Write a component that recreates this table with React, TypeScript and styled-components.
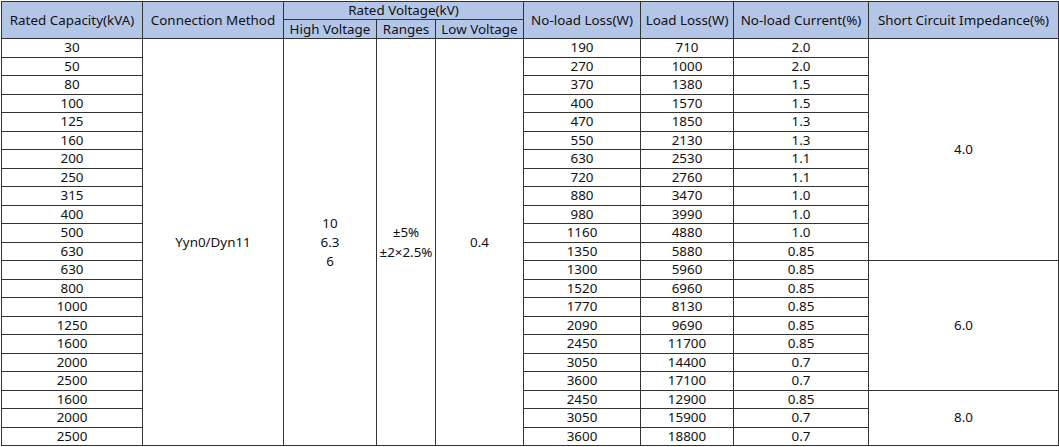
import React from "react";
import styled, { createGlobalStyle } from "styled-components";

const Global = createGlobalStyle`
  html, body { margin: 0; padding: 0; background: #ffffff; }
  body { padding: 1px 0 0 1px; font-family: "Noto Sans", "Open Sans", "Liberation Sans", sans-serif; }
`;

const Table = styled.table`
  border-collapse: collapse;
  table-layout: fixed;
  width: 1057px;
  font-family: "Noto Sans", "Open Sans", "Liberation Sans", sans-serif;
  font-size: 13.4px;
  color: #111;
`;

const HeadRow = styled.tr<{ $h: number }>`
  height: ${(p) => p.$h}px;
`;

const Th = styled.th`
  background: #b4c6e7;
  border: 1px solid #333;
  font-weight: normal;
  padding: 0;
  text-align: center;
  vertical-align: middle;
  line-height: 17px;
  white-space: nowrap;
  overflow: hidden;
`;

const Row = styled.tr`
  height: 18.5px;
`;

const Td = styled.td`
  border: 1px solid #333;
  padding: 0;
  text-align: center;
  vertical-align: middle;
  line-height: 17px;
  white-space: nowrap;
`;

const Stack = styled.div<{ $lh: number }>`
  display: flex;
  flex-direction: column;
  align-items: center;
  line-height: ${(p) => p.$lh}px;
`;

const widths = [141, 141, 93, 59, 88, 117, 93, 135, 190];

const rows: [string, string, string, string][] = [
  ["30", "190", "710", "2.0"],
  ["50", "270", "1000", "2.0"],
  ["80", "370", "1380", "1.5"],
  ["100", "400", "1570", "1.5"],
  ["125", "470", "1850", "1.3"],
  ["160", "550", "2130", "1.3"],
  ["200", "630", "2530", "1.1"],
  ["250", "720", "2760", "1.1"],
  ["315", "880", "3470", "1.0"],
  ["400", "980", "3990", "1.0"],
  ["500", "1160", "4880", "1.0"],
  ["630", "1350", "5880", "0.85"],
  ["630", "1300", "5960", "0.85"],
  ["800", "1520", "6960", "0.85"],
  ["1000", "1770", "8130", "0.85"],
  ["1250", "2090", "9690", "0.85"],
  ["1600", "2450", "11700", "0.85"],
  ["2000", "3050", "14400", "0.7"],
  ["2500", "3600", "17100", "0.7"],
  ["1600", "2450", "12900", "0.85"],
  ["2000", "3050", "15900", "0.7"],
  ["2500", "3600", "18800", "0.7"],
];

const impedance: Record<number, [string, number]> = {
  0: ["4.0", 12],
  12: ["6.0", 7],
  19: ["8.0", 3],
};

export default function App() {
  return (
    <>
      <Global />
      <Table>
        <colgroup>
          {widths.map((w, i) => (
            <col key={i} style={{ width: w }} />
          ))}
        </colgroup>
        <thead>
          <HeadRow $h={18}>
            <Th rowSpan={2}>Rated Capacity(kVA)</Th>
            <Th rowSpan={2}>Connection Method</Th>
            <Th colSpan={3}>Rated Voltage(kV)</Th>
            <Th rowSpan={2}>No-load Loss(W)</Th>
            <Th rowSpan={2}>Load Loss(W)</Th>
            <Th rowSpan={2}>No-load Current(%)</Th>
            <Th rowSpan={2}>Short Circuit Impedance(%)</Th>
          </HeadRow>
          <HeadRow $h={19}>
            <Th>High Voltage</Th>
            <Th>Ranges</Th>
            <Th>Low Voltage</Th>
          </HeadRow>
        </thead>
        <tbody>
          {rows.map((r, i) => (
            <Row key={i}>
              <Td>{r[0]}</Td>
              {i === 0 && (
                <>
                  <Td rowSpan={rows.length}>Yyn0/Dyn11</Td>
                  <Td rowSpan={rows.length}>
                    <Stack $lh={19}>
                      <span>10</span>
                      <span>6.3</span>
                      <span>6</span>
                    </Stack>
                  </Td>
                  <Td rowSpan={rows.length}>
                    <Stack $lh={20}>
                      <span>±5%</span>
                      <span>±2×2.5%</span>
                    </Stack>
                  </Td>
                  <Td rowSpan={rows.length}>0.4</Td>
                </>
              )}
              <Td>{r[1]}</Td>
              <Td>{r[2]}</Td>
              <Td>{r[3]}</Td>
              {impedance[i] && (
                <Td rowSpan={impedance[i][1]}>{impedance[i][0]}</Td>
              )}
            </Row>
          ))}
        </tbody>
      </Table>
    </>
  );
}
